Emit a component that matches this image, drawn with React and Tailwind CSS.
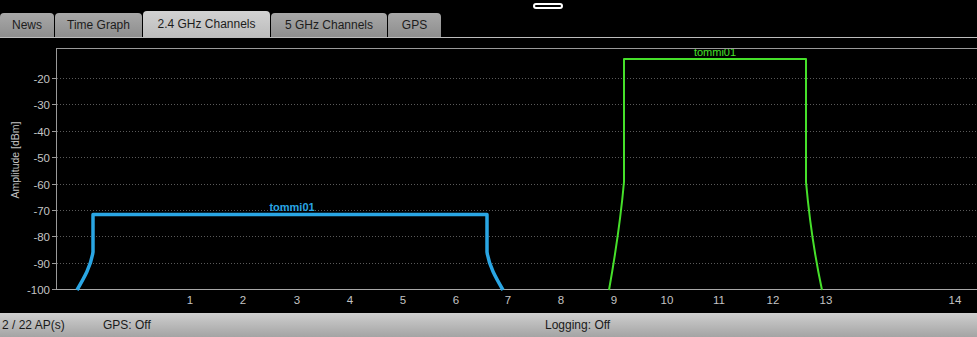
import React from 'react';

const tabs = [
  { label: 'News', w: 'w-[54px]' },
  { label: 'Time Graph', w: 'w-[87px]' },
  { label: '2.4 GHz Channels', w: 'w-[127px]', active: true },
  { label: '5 GHz Channels', w: 'w-[116px]' },
  { label: 'GPS', w: 'w-[53px]' },
];

const yTicks = [-20, -30, -40, -50, -60, -70, -80, -90, -100];
const yFor = (db) => 289 - (db + 100) * 2.6375;

const xTicks = [
  [1, 190], [2, 243], [3, 297], [4, 350], [5, 403], [6, 456], [7, 508],
  [8, 561], [9, 614], [10, 667], [11, 719], [12, 773], [13, 826], [14, 955],
];

const Chart = () => (
  <svg width="977" height="275" viewBox="0 38 977 275" className="block">
    {/* frame */}
    <line x1="56" y1="48.5" x2="977" y2="48.5" stroke="#9a9a9a" strokeWidth="1" />
    <line x1="56.5" y1="48" x2="56.5" y2="289" stroke="#9a9a9a" strokeWidth="1" />

    {/* grid + y labels */}
    {yTicks.map((db) => {
      const y = Math.round(yFor(db)) + 0.5;
      return (
        <g key={db}>
          {db !== -100 && (
            <line x1="57" y1={y} x2="977" y2={y} stroke="#5a5a5a" strokeWidth="1" strokeDasharray="1 2" />
          )}
          <line x1="52" y1={y} x2="56" y2={y} stroke="#9a9a9a" strokeWidth="1" />
          <text x="50" y={y + 4} textAnchor="end" fontSize="11.5" fill="#c4c4c4" fontFamily="Liberation Sans, Arial, sans-serif">
            {db}
          </text>
        </g>
      );
    })}
    <line x1="56" y1="289.5" x2="977" y2="289.5" stroke="#a8a8a8" strokeWidth="1" />

    {/* x labels */}
    {xTicks.map(([ch, x]) => (
      <text key={ch} x={x} y="304" textAnchor="middle" fontSize="11.5" fill="#c4c4c4" fontFamily="Liberation Sans, Arial, sans-serif">
        {ch}
      </text>
    ))}

    {/* axis title */}
    <text
      x="0" y="0"
      transform="translate(19 160) rotate(-90)"
      textAnchor="middle"
      fontSize="10.5"
      fill="#c4c4c4"
      fontFamily="Liberation Sans, Arial, sans-serif"
    >
      Amplitude [dBm]
    </text>

    {/* blue network */}
    <path
      d="M 77 290 C 84 278, 91 266, 93 252 L 93 214.5 L 487 214.5 L 487 252 C 489 266, 496 278, 503 290"
      fill="none"
      stroke="#2aa6e4"
      strokeWidth="3.5"
      strokeLinejoin="round"
    />
    <text x="292" y="211" textAnchor="middle" fontSize="11" fontWeight="bold" fill="#2aa6e4" fontFamily="Liberation Sans, Arial, sans-serif">
      tommi01
    </text>

    {/* green network */}
    <path
      d="M 609 290 C 614 262, 620 226, 624 182 L 624 59 L 806 59 L 806 182 C 810 226, 816 262, 822 290"
      fill="none"
      stroke="#46e02a"
      strokeWidth="2"
      strokeLinejoin="round"
    />
    <text x="715" y="56" textAnchor="middle" fontSize="11" fill="#46e02a" fontFamily="Liberation Sans, Arial, sans-serif">
      tommi01
    </text>
    <line x1="560" y1="48.5" x2="977" y2="48.5" stroke="#9a9a9a" strokeWidth="1" />
  </svg>
);

const App = () => {
  return (
    <div className="relative w-[977px] h-[337px] bg-black flex flex-col overflow-hidden font-['Liberation_Sans',Arial,sans-serif]">
      {/* drag handle */}
      <div className="absolute left-[533px] top-[3px] w-[30px] h-[6px] rounded-full border-2 border-white bg-black" />

      {/* Tabs */}
      <div className="h-[38px] flex items-end gap-px border-b border-[#bdbdbd]">
        {tabs.map((t) => (
          <div
            key={t.label}
            className={`${t.w} flex items-center justify-center rounded-t-[4px] text-[12px] text-[#1c1c1c] ${
              t.active
                ? 'h-[26px] bg-gradient-to-b from-[#d2d2d2] to-[#bcbcbc]'
                : 'h-[24px] bg-gradient-to-b from-[#a8a8a8] to-[#8e8e8e]'
            }`}
          >
            {t.label}
          </div>
        ))}
      </div>

      {/* Chart */}
      <div className="h-[275px]">
        <Chart />
      </div>

      {/* Status bar */}
      <div className="flex-1 flex items-center bg-gradient-to-b from-[#cfcfcf] to-[#a4a4a4] text-[12px] text-[#1a1a1a]">
        <span className="pl-[2px] w-[103px]">2 / 22 AP(s)</span>
        <span className="w-[442px]">GPS: Off</span>
        <span>Logging: Off</span>
      </div>
    </div>
  );
};

export default App;
